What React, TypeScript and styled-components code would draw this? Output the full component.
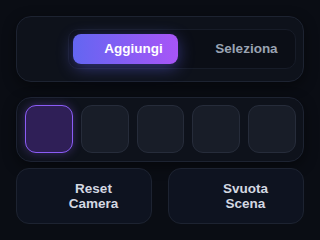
import React, { useState } from "react";
import styled, { createGlobalStyle } from "styled-components";

const Global = createGlobalStyle`
  html, body { margin: 0; padding: 0; background: #0a0d14; }
  body { font-family: "Liberation Sans", Arial, sans-serif; }
  * { box-sizing: border-box; }
`;

const Page = styled.div`
  width: 320px;
  height: 240px;
  padding: 16px;
  display: flex;
  flex-direction: column;
  gap: 15px;
  background: #0a0d14;
`;

const Panel = styled.div`
  background: #0e121b;
  border: 1px solid #1d2331;
  border-radius: 15px;
  box-shadow: 0 4px 14px rgba(0, 0, 0, 0.45);
`;

const ModePanel = styled(Panel)`
  height: 66px;
  display: flex;
  align-items: center;
  padding: 0 7px 0 51px;
`;

const Tabs = styled.div`
  flex: 1;
  height: 40px;
  display: flex;
  gap: 8px;
  padding: 4px;
  background: #0b0e16;
  border: 1px solid #171c28;
  border-radius: 10px;
`;

const Tab = styled.button<{ $active?: boolean }>`
  flex: 1;
  border: none;
  border-radius: 8px;
  font-family: inherit;
  font-size: 13.5px;
  font-weight: 700;
  padding: 0 0 0 16px;
  cursor: pointer;
  color: ${(p) => (p.$active ? "#ffffff" : "#9aa3b2")};
  background: ${(p) =>
    p.$active ? "linear-gradient(90deg, #6366f1 0%, #a855f7 100%)" : "transparent"};
  box-shadow: ${(p) => (p.$active ? "0 4px 16px rgba(99, 102, 241, 0.45)" : "none")};
`;

const SlotPanel = styled(Panel)`
  height: 66px;
  display: flex;
  align-items: center;
  gap: 8px;
  padding: 0 7px 0 8px;
`;

const Slot = styled.div<{ $selected?: boolean }>`
  flex: 1;
  height: 48px;
  border-radius: 11px;
  background: ${(p) => (p.$selected ? "#2f1f57" : "#181d28")};
  border: 1px solid ${(p) => (p.$selected ? "#8b5cf6" : "#262c3a")};
  box-shadow: ${(p) => (p.$selected ? "0 0 10px rgba(139, 92, 246, 0.35)" : "none")};
`;

const Actions = styled.div`
  display: grid;
  grid-template-columns: 1fr 1fr;
  gap: 16px;
  margin-top: -9px;
`;

const ActionButton = styled.button`
  height: 56px;
  display: flex;
  align-items: center;
  justify-content: center;
  padding: 0 0 0 19px;
  background: #0e1320;
  border: 1px solid #1d2331;
  border-radius: 13px;
  color: #d4d8e2;
  font-family: inherit;
  font-size: 13.5px;
  font-weight: 700;
  line-height: 15px;
  cursor: pointer;
`;

const Label = styled.span`
  width: min-content;
  text-align: center;
`;

export default function App() {
  const [mode, setMode] = useState("add");
  const [sel, setSel] = useState(0);
  return (
    <>
      <Global />
      <Page>
        <ModePanel>
          <Tabs>
            <Tab $active={mode === "add"} onClick={() => setMode("add")}>
              Aggiungi
            </Tab>
            <Tab $active={mode === "select"} onClick={() => setMode("select")}>
              Seleziona
            </Tab>
          </Tabs>
        </ModePanel>
        <SlotPanel>
          {[0, 1, 2, 3, 4].map((i) => (
            <Slot key={i} $selected={sel === i} onClick={() => setSel(i)} />
          ))}
        </SlotPanel>
        <Actions>
          <ActionButton>
            <Label>Reset Camera</Label>
          </ActionButton>
          <ActionButton>
            <Label>Svuota Scena</Label>
          </ActionButton>
        </Actions>
      </Page>
    </>
  );
}
